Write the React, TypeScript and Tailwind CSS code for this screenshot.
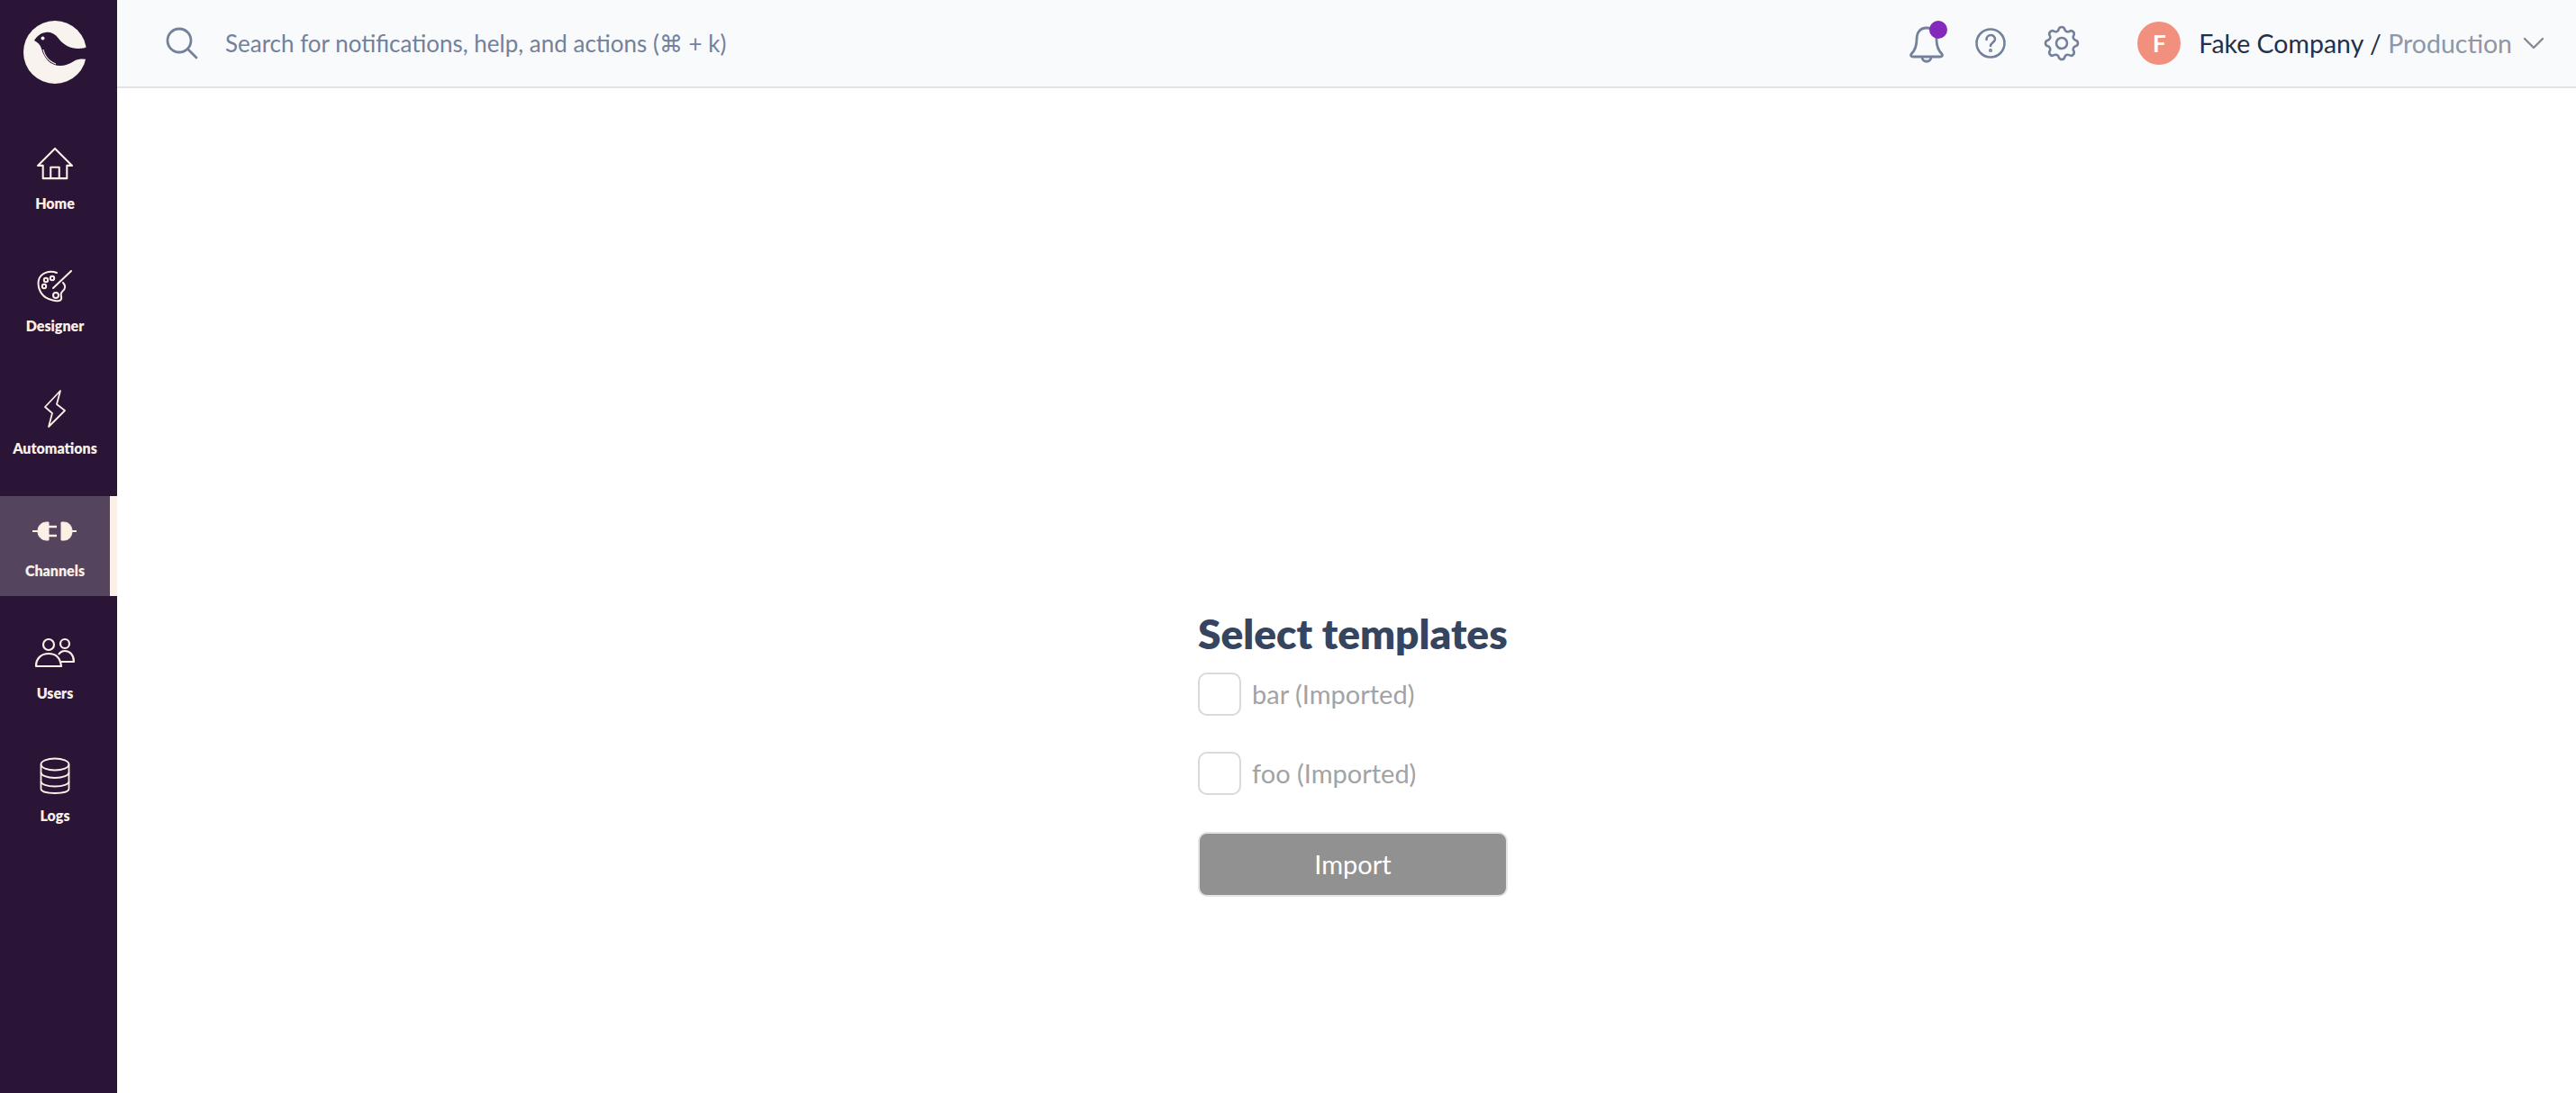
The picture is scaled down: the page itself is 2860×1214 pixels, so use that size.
import React from "react";

const cream = "#FBEFE6";

const HomeIcon = () => (
  <svg width="42" height="38" viewBox="0 0 44 40" fill="none" stroke={cream} strokeWidth="2.2" strokeLinejoin="round">
    <path d="M22 2 L42 22 H36 V37 H8 V22 H2 Z" />
    <path d="M17 37 V24 H27 V37" />
  </svg>
);

const PaletteIcon = () => (
  <svg width="40" height="37" viewBox="0 0 40 37" fill="none" stroke={cream} strokeWidth="2" strokeLinecap="round" strokeLinejoin="round">
    <path d="M22 3 C14 0 4 3 2 11 C0 20 5 29 13 32 C18 34 26 36 27 32 C28 29 25 27 28 24 C32 21 32 17 29 14" />
    <circle cx="10" cy="11" r="2.2" />
    <circle cx="17" cy="9" r="2.2" />
    <circle cx="8" cy="18" r="2.2" />
    <circle cx="21" cy="28" r="3" />
    <path d="M18 20 L38 1" />
  </svg>
);

const BoltIcon = () => (
  <svg width="26" height="44" viewBox="0 0 26 44" fill="none" stroke={cream} strokeWidth="1.8" strokeLinejoin="round">
    <path d="M19 2 L2 20 L10 27 L6 42 L24 24 L15 17 Z" />
  </svg>
);

const PlugIcon = () => (
  <svg width="50" height="24" viewBox="0 0 50 24" fill={cream} stroke={cream}>
    <path d="M0 12 H6" strokeWidth="2" />
    <path d="M6 12 C6 6 10 2 16 2 H18 V22 H16 C10 22 6 18 6 12 Z" />
    <path d="M18 7 H27 M18 17 H27" strokeWidth="2.6" />
    <path d="M32 2 H35 C41 2 44 7 44 12 C44 17 41 22 35 22 H32 Z" />
    <path d="M44 12 H49" strokeWidth="2" />
  </svg>
);

const UsersIcon = () => (
  <svg width="46" height="36" viewBox="0 0 46 36" fill="none" stroke={cream} strokeWidth="2.2" strokeLinejoin="round">
    <circle cx="16" cy="8" r="6" />
    <path d="M2 32 C2 23 8 18 16 18 C24 18 29 23 30 32 Z" />
    <circle cx="34" cy="7" r="5" />
    <path d="M27 19 C29 16 31 15 34 15 C40 15 44 20 44 27 H30" />
  </svg>
);

const LogsIcon = () => (
  <svg width="36" height="42" viewBox="0 0 36 42" fill="none" stroke={cream} strokeWidth="1.8">
    <ellipse cx="18" cy="8" rx="15.5" ry="6.5" />
    <path d="M2.5 8 V17 C2.5 20 9 23 18 23 C27 23 33.5 20 33.5 17 V8" />
    <path d="M2.5 17 V27 C2.5 30 9 32.5 18 32.5 C27 32.5 33.5 30 33.5 27 V17" />
    <path d="M2.5 27 V35 C2.5 38 9 40 18 40 C27 40 33.5 38 33.5 35 V27" />
  </svg>
);

// cream disc with the dark bird cut out of it, open to the right
const Logo = () => (
  <svg width="74" height="74" viewBox="24 21 74 74">
    <circle cx="61" cy="58" r="35" fill="#F8F3EE" />
    <path
      d="M38 45 C41 40 46 36 51 36 C58 35 62 39 66 44 C71 50 78 54 87 54 C91 54 94 53 98 52 L100 66 C96 66 92 65 87 66 C81 67 77 73 67 73 C56 73 49 65 46 54 C45 50 42 47 38 45 Z"
      fill="#2A1536"
    />
    <circle cx="47.5" cy="42.5" r="2" fill="#F8F3EE" />
    <path d="M48 55 C50 63 55 68 62 71 C55 69 50 64 48 55 Z" fill="#F8F3EE" stroke="#F8F3EE" strokeWidth="0.8" />
  </svg>
);

const navItems = [
  { label: "Home", icon: <HomeIcon /> },
  { label: "Designer", icon: <PaletteIcon /> },
  { label: "Automations", icon: <BoltIcon /> },
  { label: "Channels", icon: <PlugIcon />, active: true },
  { label: "Users", icon: <UsersIcon /> },
  { label: "Logs", icon: <LogsIcon /> },
];

const Sidebar = () => (
  <aside className="w-[130px] shrink-0 bg-[#2A1536] flex flex-col">
    <div className="h-[143px] pt-[21px] pr-[8px] flex justify-center items-start">
      <Logo />
    </div>
    <nav className="flex flex-col gap-[25px]">
      {navItems.map((item) => (
        <div
          key={item.label}
          className={
            item.active
              ? "h-[111px] flex flex-col items-center bg-[#55445E] border-r-[8px] border-[#FBEFE6]"
              : "h-[111px] flex flex-col items-center pr-[8px]"
          }
        >
          <div className="mt-[19px] mb-[14px] h-[40px] flex items-center justify-center">{item.icon}</div>
          <span className="text-[16px] leading-[20px] font-extrabold text-[#FBEFE6] whitespace-nowrap">{item.label}</span>
        </div>
      ))}
    </nav>
  </aside>
);

const Header = () => (
  <header className="h-[98px] shrink-0 bg-[#F9FAFC] border-b-2 border-[#E4E2E6] flex items-center pl-[54px] pr-[35px]">
    <svg width="36" height="36" viewBox="0 0 36 36" fill="none" stroke="#73819B" strokeWidth="2.8" strokeLinecap="round">
      <circle cx="15" cy="15" r="13" />
      <path d="M25 25 L34 34" />
    </svg>
    <span className="ml-[30px] text-[26px] text-[#73819B] whitespace-nowrap">Search for notifications, help, and actions (⌘ + k)</span>
    <div className="ml-auto flex items-center">
      <div className="relative w-[38px] h-[46px]">
        <svg width="38" height="46" viewBox="0 0 38 46" fill="none" stroke="#73819B" strokeWidth="2.8" strokeLinejoin="round">
          <path d="M19 6 C11 6 8 12 8 19 C8 27 6 31 2 35 C1 37 2 38 4 38 H34 C36 38 37 37 36 35 C32 31 30 27 30 19 C30 12 27 6 19 6 Z" />
          <path d="M14 38 C14 45 24 45 24 38" />
        </svg>
        <div className="absolute top-[-2px] right-[-4px] w-[20px] h-[20px] rounded-full bg-[#8529BC]" />
      </div>
      <svg className="ml-[35px]" width="34" height="34" viewBox="0 0 34 34" fill="none" stroke="#73819B" strokeWidth="2.6" strokeLinecap="round">
        <circle cx="17" cy="17" r="15.5" />
        <path d="M12.5 13 C12.5 6.5 22 6.5 22 12.5 C22 16 17 16.5 17 20" />
        <circle cx="17" cy="25" r="0.8" />
      </svg>
      <svg className="ml-[38px]" width="48" height="48" viewBox="0 0 24 24" fill="none" stroke="#73819B" strokeWidth="1.3" strokeLinecap="round" strokeLinejoin="round">
        <path d="M10.325 4.317c.426-1.756 2.924-1.756 3.35 0a1.724 1.724 0 002.573 1.066c1.543-.94 3.31.826 2.37 2.37a1.724 1.724 0 001.065 2.572c1.756.426 1.756 2.924 0 3.35a1.724 1.724 0 00-1.066 2.573c.94 1.543-.826 3.31-2.37 2.37a1.724 1.724 0 00-2.572 1.065c-.426 1.756-2.924 1.756-3.35 0a1.724 1.724 0 00-2.573-1.066c-1.543.94-3.31-.826-2.37-2.37a1.724 1.724 0 00-1.065-2.572c-1.756-.426-1.756-2.924 0-3.35a1.724 1.724 0 001.066-2.573c-.94-1.543.826-3.31 2.37-2.37.996.608 2.296.07 2.572-1.065z" />
        <circle cx="12" cy="12" r="3" />
      </svg>
      <div className="ml-[60px] w-[48px] h-[48px] rounded-full bg-[#F2907F] flex items-center justify-center text-white text-[26px] font-bold">F</div>
      <span className="ml-[20px] text-[28.5px] text-[#24304A] whitespace-nowrap">
        Fake Company / <span className="text-[#8F96A6]">Production</span>
      </span>
      <svg className="ml-[12px]" width="24" height="14" viewBox="0 0 24 14" fill="none" stroke="#8C8496" strokeWidth="2.4" strokeLinecap="round" strokeLinejoin="round">
        <path d="M2 2 L12 12 L22 2" />
      </svg>
    </div>
  </header>
);

const TemplateRow = ({ label }: { label: string }) => (
  <label className="flex items-center h-[48px] gap-[12px]">
    <span className="w-[48px] h-[48px] rounded-[10px] border-2 border-[#D9D9D9] bg-white" />
    <span className="text-[29px] text-[#A3A3A3]">{label}</span>
  </label>
);

export default function App() {
  return (
    <div className="flex w-[2860px] h-[1214px] bg-white overflow-hidden font-['Lato','Noto_Sans',sans-serif]">
      <Sidebar />
      <div className="flex-1 flex flex-col">
        <Header />
        <main className="flex-1 flex justify-center pt-[578px] pl-[14px]">
          <div className="w-[344px] flex flex-col">
            <h1 className="text-[46px] leading-[56px] font-extrabold text-[#36455F] whitespace-nowrap">Select templates</h1>
            <div className="mt-[15px] flex flex-col gap-[40px]">
              <TemplateRow label="bar (Imported)" />
              <TemplateRow label="foo (Imported)" />
            </div>
            <button className="mt-[41px] h-[72px] rounded-[10px] bg-[#919191] border-2 border-[#E4E2E6] text-white text-[29px]">Import</button>
          </div>
        </main>
      </div>
    </div>
  );
}
